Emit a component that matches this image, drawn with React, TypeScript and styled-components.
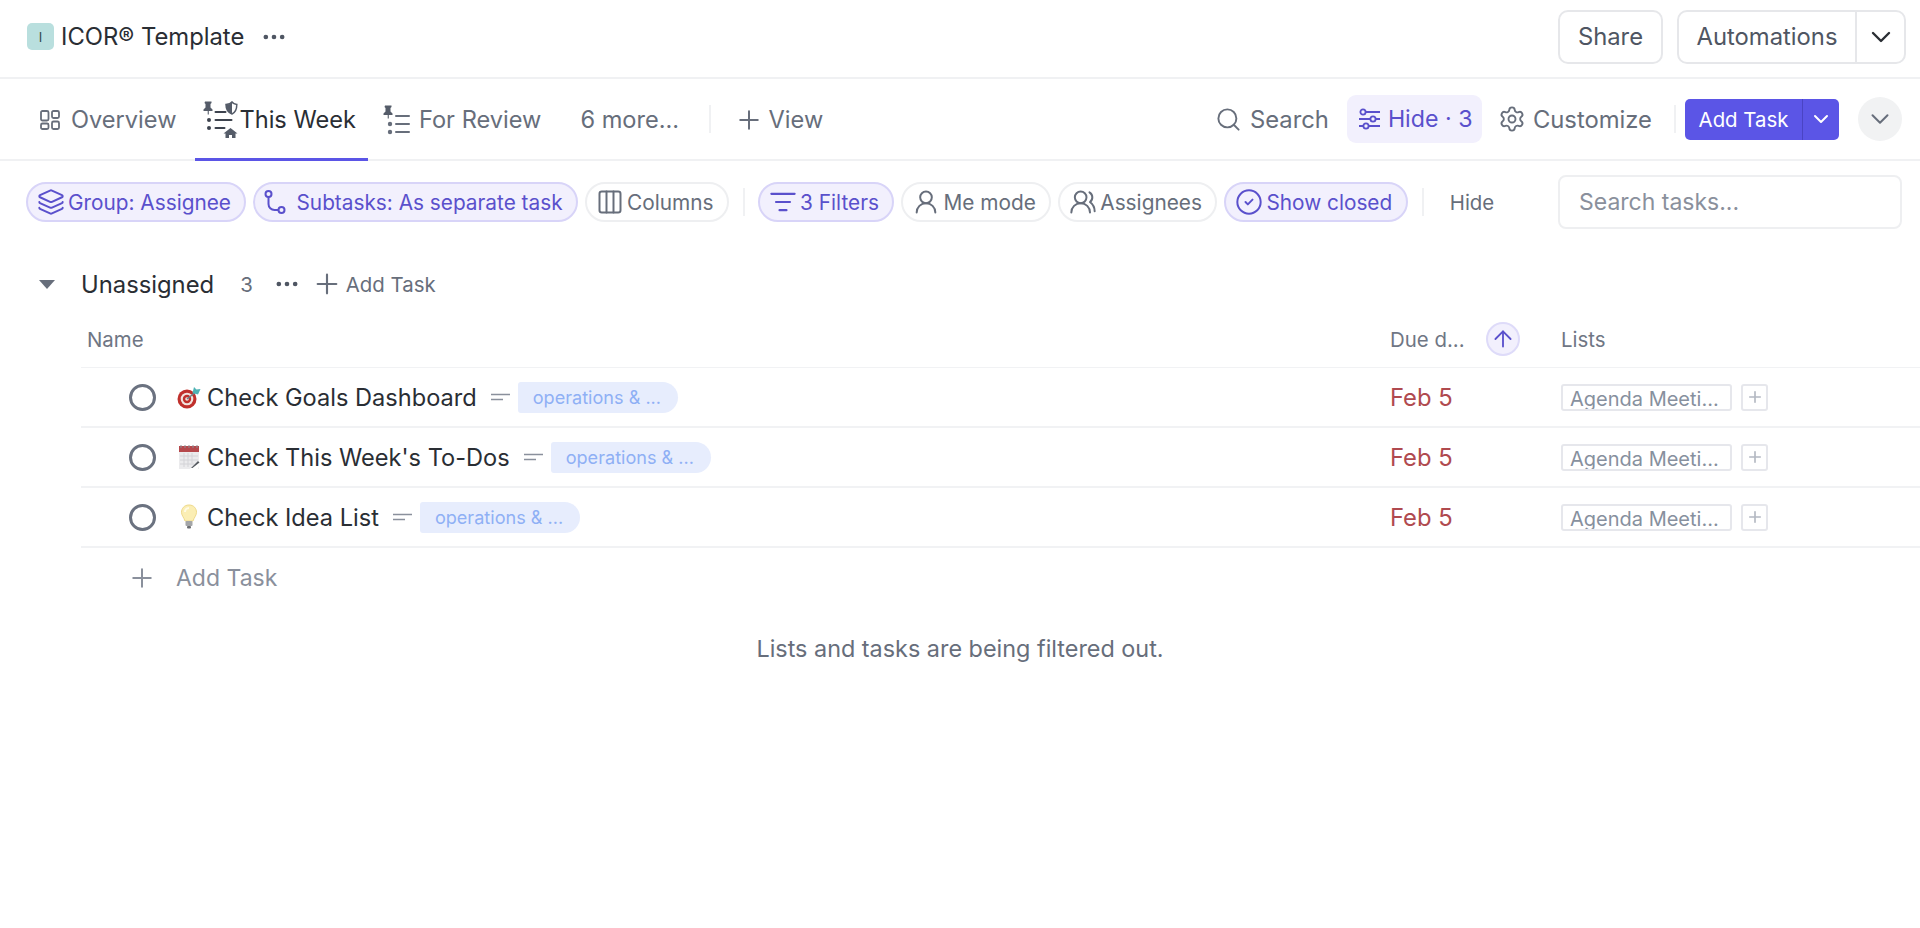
import React from 'react'
import styled, { createGlobalStyle } from 'styled-components'
import {
  ArrowUp,
  ChevronDown,
  CircleCheck,
  Columns3,
  Ellipsis,
  Layers,
  ListFilter,
  Plus,
  Search,
  Settings,
  UserRound,
  UsersRound,
} from 'lucide-react'

const Global = createGlobalStyle`
  html, body { margin: 0; padding: 0; background: #fff; }
  body { font-family: Inter, "Noto Sans", sans-serif; color: #2a2e34; }
  * { box-sizing: border-box; }
`

const Page = styled.div`
  width: 1920px;
  height: 928px;
  overflow: hidden;
  background: #fff;
`

const Header = styled.header`
  height: 79px;
  display: flex;
  align-items: center;
  padding: 0 14px 4px 27px;
  border-bottom: 2px solid #f0f1f3;
`

const Logo = styled.div`
  width: 27px;
  height: 27px;
  border-radius: 5px;
  background: #b9dfde;
  color: #2f4a4c;
  font-size: 13px;
  display: flex;
  align-items: center;
  justify-content: center;
  margin-right: 7px;
`

const Title = styled.div`
  font-size: 23.8px;
  color: #2a2e34;
`

const Dots = styled.span<{ $ml: number }>`
  display: inline-flex;
  margin-left: ${(p) => p.$ml}px;
  color: #4f5663;
`

const HeaderRight = styled.div`
  margin-left: auto;
  display: flex;
  gap: 14px;
`

const OutlineButton = styled.div`
  height: 54px;
  border: 2px solid #e6e7ea;
  border-radius: 10px;
  display: flex;
  align-items: center;
  font-size: 23.8px;
  color: #4f5663;
`

const ShareButton = styled(OutlineButton)`
  width: 105px;
  justify-content: center;
`

const AutomationsButton = styled(OutlineButton)`
  width: 229px;
`

const AutoLabel = styled.div`
  width: 178px;
  height: 100%;
  display: flex;
  align-items: center;
  justify-content: center;
  border-right: 2px solid #e6e7ea;
`

const AutoCaret = styled.div`
  flex: 1;
  display: flex;
  justify-content: center;
  color: #2a2e34;
`

const TabBar = styled.nav`
  height: 82px;
  display: flex;
  align-items: stretch;
  padding: 0 18px 0 33px;
  gap: 7px;
  border-bottom: 2px solid #f0f1f3;
`

const Tab = styled.div<{ $active?: boolean; $gap?: number; $ml?: number }>`
  position: relative;
  display: flex;
  align-items: center;
  gap: ${(p) => p.$gap ?? 9}px;
  padding: 2px 12px 0 7px;
  margin-left: ${(p) => p.$ml ?? 0}px;
  margin-bottom: -2px;
  font-size: 23.6px;
  color: ${(p) => (p.$active ? '#2a2e34' : '#676e7b')};
  border-bottom: 3px solid ${(p) => (p.$active ? '#5b55e6' : 'transparent')};
`

const VRule = styled.div<{ $ml: number; $mr: number }>`
  width: 2px;
  height: 28px;
  background: #f0f1f3;
  margin: 0 ${(p) => p.$mr}px 0 ${(p) => p.$ml}px;
  align-self: center;
  flex: none;
`

const Spacer = styled.div`
  flex: 1;
`

const PlainAction = styled.div<{ $ml: number; $gap: number }>`
  display: flex;
  align-items: center;
  gap: ${(p) => p.$gap}px;
  margin-left: ${(p) => p.$ml}px;
  font-size: 23.8px;
  color: #676e7b;
`

const HideChip = styled.div`
  height: 48px;
  width: 135px;
  align-self: center;
  margin-left: 11px;
  padding-left: 12px;
  border-radius: 9px;
  background: #f2f0fd;
  color: #5a50cc;
  display: flex;
  align-items: center;
  gap: 8px;
  font-size: 23.2px;
  white-space: nowrap;
`

const AddTaskButton = styled.div`
  align-self: center;
  width: 154px;
  height: 41px;
  border-radius: 5px;
  background: #5b55e6;
  color: #fff;
  display: flex;
  align-items: center;
  font-size: 20.4px;
`

const AddTaskLabel = styled.div`
  width: 118px;
  height: 100%;
  display: flex;
  align-items: center;
  justify-content: center;
  border-right: 1px solid #4a44c4;
`

const AddTaskCaret = styled.div`
  flex: 1;
  display: flex;
  justify-content: center;
`

const CircleToggle = styled.div`
  align-self: center;
  width: 44px;
  height: 44px;
  border-radius: 50%;
  background: #f1f2f3;
  color: #676e7b;
  margin-left: 12px;
  display: flex;
  align-items: center;
  justify-content: center;
`

const FilterBar = styled.div`
  height: 82px;
  display: flex;
  align-items: center;
  padding: 0 18px 0 26px;
  gap: 7px;
`

const Chip = styled.div<{ $on?: boolean; $gap?: number }>`
  height: 40px;
  padding: 0 13.5px 0 9px;
  border-radius: 20px;
  display: flex;
  align-items: center;
  gap: ${(p) => p.$gap ?? 3}px;
  font-size: 20.8px;
  white-space: nowrap;
  border: 2px solid ${(p) => (p.$on ? '#d8d4f8' : '#eeeff1')};
  background: ${(p) => (p.$on ? '#f2f0fd' : '#fff')};
  color: ${(p) => (p.$on ? '#5a50cc' : '#676e7b')};
`

const HideText = styled.div`
  margin-left: 12px;
  font-size: 20.4px;
  color: #676e7b;
`

const SearchInput = styled.div`
  margin-left: auto;
  width: 344px;
  height: 54px;
  border: 2px solid #eeeff1;
  border-radius: 8px;
  padding-left: 19px;
  display: flex;
  align-items: center;
  font-size: 23px;
  color: #8a909c;
`

const GroupHead = styled.div`
  margin-top: 22px;
  height: 38px;
  display: flex;
  align-items: center;
  padding-left: 39px;
`

const Triangle = styled.div`
  width: 0;
  height: 0;
  border-left: 8px solid transparent;
  border-right: 8px solid transparent;
  border-top: 9px solid #676e7b;
  margin-right: 26px;
`

const GroupName = styled.div`
  font-size: 23.8px;
  color: #2a2e34;
`

const GroupCount = styled.div`
  font-size: 20.4px;
  color: #676e7b;
  margin-left: 26px;
`

const GroupAdd = styled.div`
  display: flex;
  align-items: center;
  gap: 3px;
  margin-left: 10px;
  font-size: 20.4px;
  color: #676e7b;
`

const Table = styled.div`
  margin-left: 81px;
`

const Grid = styled.div`
  display: grid;
  grid-template-columns: 1309px 171px 1fr;
  align-items: center;
`

const ColumnHead = styled(Grid)`
  padding: 19px 0 11px;
  border-bottom: 1px solid #f1f2f4;
  font-size: 20.4px;
  color: #6f7684;
`

const NameHead = styled.div`
  padding-left: 6px;
`

const DueHead = styled.div`
  display: flex;
  align-items: center;
  gap: 21px;
`

const SortBadge = styled.div`
  width: 34px;
  height: 34px;
  border-radius: 50%;
  background: #f2f0fd;
  border: 2px solid #dedbf9;
  color: #5a50cc;
  display: flex;
  align-items: center;
  justify-content: center;
`

const Row = styled(Grid)`
  height: 60px;
  border-bottom: 2px solid #f1f2f4;
`

const NameCell = styled.div`
  display: flex;
  align-items: center;
  padding-left: 48px;
`

const StatusRing = styled.div`
  width: 27px;
  height: 27px;
  border: 3px solid #6b7280;
  border-radius: 50%;
  margin-right: 21px;
  flex: none;
`

const Emoji = styled.svg`
  width: 24px;
  height: 28px;
  margin-right: 6px;
  flex: none;
`

const TaskName = styled.div`
  font-size: 23.6px;
  color: #2a2e34;
`

const DescMark = styled.svg`
  width: 19px;
  height: 10px;
  margin: 0 8px 0 14px;
  flex: none;
`

const Tag = styled.div`
  width: 160px;
  height: 31px;
  border-radius: 3px 16px 16px 3px;
  background: #e7edfd;
  color: #8fb0f5;
  font-size: 18.1px;
  padding-left: 15px;
  display: flex;
  align-items: center;
`

const DueDate = styled.div`
  font-size: 23.8px;
  color: #b04a4f;
`

const ListCell = styled.div`
  display: flex;
  gap: 9px;
`

const ListChip = styled.div`
  width: 171px;
  height: 27px;
  border: 2px solid #e6e7ec;
  border-radius: 3px;
  padding-left: 7px;
  font-size: 20px;
  line-height: 26px;
  color: #87909e;
  overflow: hidden;
  white-space: nowrap;
`

const ListAdd = styled.div`
  width: 27px;
  height: 27px;
  border: 2px solid #e6e7ec;
  border-radius: 3px;
  color: #b3b8c2;
  display: flex;
  align-items: center;
  justify-content: center;
`

const AddRow = styled.div`
  height: 59px;
  display: flex;
  align-items: center;
  padding-left: 46px;
  gap: 19px;
  font-size: 23px;
  color: #8a909c;
`

const Notice = styled.div`
  margin-top: 28px;
  text-align: center;
  line-height: 28px;
  font-size: 23.4px;
  color: #676e7b;
`

const Pin = () => (
  <path d="M3 0.5h6.5v1.5l-1 1v3.5l2 2v1.5H6.8v3.5H5.7v-3.5H1.5V8.5l2-2V3l-1-1z" fill="#555c69" />
)

const WeekIcon = () => (
  <svg width="36" height="37" viewBox="0 0 36 37" fill="none">
    <Pin />
    <g fill="#3d434e">
      <circle cx="7" cy="19" r="2" />
      <circle cx="7" cy="27" r="2" />
    </g>
    <g stroke="#3d434e" strokeWidth="2" strokeLinecap="round">
      <path d="M13.5 11h10" />
      <path d="M13.5 19h16" />
      <path d="M13.5 27h9" />
    </g>
    <path d="M24 3.5c3-.3 5-1.2 6-2.5 1 1.3 2.8 2.2 4.8 2.5 0 5-1.5 8-4.8 9.5-3.8-1.5-6-4.500-6-9.500z" stroke="#555c69" strokeWidth="1.500" />
    <path d="M24 4c2-.300 4-1 6-2.500v11.500c-3.800-1.500-6-4-6-9z" fill="#555c69" />
    <path d="M21.500 32.500L28.500 27l7 5.500h-2v4.500h-3.500v-3h-3v3h-3.500v-4.500z" fill="#555c69" />
  </svg>
)

const ReviewIcon = () => (
  <svg width="28" height="30" viewBox="0 0 28 30" fill="none">
    <Pin />
    <g fill="#676e7b">
      <circle cx="8" cy="19" r="2.200" />
      <circle cx="8" cy="27" r="2.200" />
    </g>
    <g stroke="#676e7b" strokeWidth="2" strokeLinecap="round">
      <path d="M14 11h13" />
      <path d="M14 19h13" />
      <path d="M14 27h13" />
    </g>
  </svg>
)

const OverviewIcon = () => (
  <svg width="20" height="20" viewBox="0 0 20 20" fill="none" stroke="#676e7b" strokeWidth="1.800">
    <rect x="1" y="1" width="7.500" height="9.500" rx="1.500" />
    <rect x="12" y="1" width="7" height="7" rx="1.500" />
    <rect x="1" y="13.500" width="7.500" height="5.500" rx="1.500" />
    <rect x="12" y="11.500" width="7" height="7.500" rx="1.500" />
  </svg>
)

const SubtaskIcon = () => (
  <svg width="22" height="24" viewBox="0 0 22 24" fill="none" stroke="#5a50cc" strokeWidth="2">
    <circle cx="4.500" cy="4" r="3" />
    <circle cx="17.500" cy="20" r="3" />
    <path d="M4.500 7v7a6 6 0 0 0 6 6h4" />
  </svg>
)

const HideIcon = () => (
  <svg width="21" height="22" viewBox="0 0 21 22" fill="none" stroke="#5a50cc" strokeWidth="1.800">
    <path d="M7 4h14M0 11h11M17 11h4M0 18h4M10 18h11" />
    <circle cx="4" cy="4" r="2.600" />
    <circle cx="14" cy="11" r="2.600" />
    <circle cx="7" cy="18" r="2.600" />
  </svg>
)

const TargetEmoji = () => (
  <Emoji viewBox="0 0 24 28">
    <circle cx="10" cy="16" r="9.500" fill="#c0302c" />
    <circle cx="10" cy="16" r="6.300" fill="#f2e4df" />
    <circle cx="10" cy="16" r="4.200" fill="#c0302c" />
    <circle cx="10" cy="16" r="1.800" fill="#f2e4df" />
    <path d="M10 16L20 8" stroke="#6d7f86" strokeWidth="1.400" />
    <path d="M15.500 10l1.500-6 2.500 2.500 4-.5-2.500 5.500z" fill="#4fb3b5" />
  </Emoji>
)

const CalendarEmoji = () => (
  <Emoji viewBox="0 0 24 28">
    <rect x="2" y="4" width="20" height="22" fill="#ebebed" />
    <rect x="2" y="3" width="20" height="6" fill="#b5484c" />
    <g stroke="#8d8d92" strokeWidth="1">
      <path d="M4 2v3M8 2v3M12 2v3M16 2v3M20 2v3" />
    </g>
    <g stroke="#d3d3d7" strokeWidth="1">
      <path d="M3 13h18M3 17h18M3 21h14M7 10v14M11 10v14M15 10v10" />
    </g>
    <path d="M13 26l8-8 2 1-2 7z" fill="#fff" />
    <path d="M14 25l7-7 1.500 1.500-7 5.500z" fill="#555a60" />
  </Emoji>
)

const BulbEmoji = () => (
  <Emoji viewBox="0 0 24 28">
    <path d="M12 2c-5 0-7.500 3.700-7.500 7.300 0 3.200 2.500 5.200 3.500 8.700h8c1-3.500 3.500-5.500 3.500-8.700C19.500 5.700 17 2 12 2z" fill="#fbeeb4" stroke="#eed98a" strokeWidth="1" />
    <path d="M12 5c-2.500 0-4 2-4 4" stroke="#fffbe6" strokeWidth="2" fill="none" />
    <rect x="8.500" y="18" width="7" height="5" rx="1" fill="#a4a6a8" />
    <rect x="10" y="23" width="4" height="2.500" rx="1" fill="#6c6e72" />
  </Emoji>
)

const tasks = [
  { name: 'Check Goals Dashboard', emoji: <TargetEmoji /> },
  { name: "Check This Week's To-Dos", emoji: <CalendarEmoji /> },
  { name: 'Check Idea List', emoji: <BulbEmoji /> },
]

export default function App() {
  return (
    <Page>
      <Global />
      <Header>
        <Logo>I</Logo>
        <Title>ICOR® Template</Title>
        <Dots $ml={16}>
          <Ellipsis size={28} />
        </Dots>
        <HeaderRight>
          <ShareButton>Share</ShareButton>
          <AutomationsButton>
            <AutoLabel>Automations</AutoLabel>
            <AutoCaret>
              <ChevronDown size={32} strokeWidth={1.8} />
            </AutoCaret>
          </AutomationsButton>
        </HeaderRight>
      </Header>

      <TabBar>
        <Tab $gap={11}>
          <OverviewIcon />
          Overview
        </Tab>
        <Tab $active $gap={1}>
          <WeekIcon />
          This Week
        </Tab>
        <Tab>
          <ReviewIcon />
          For Review
        </Tab>
        <Tab $ml={13}>6 more...</Tab>
        <VRule $ml={11} $mr={9} />
        <Tab $gap={4.5}>
          <Plus size={30} strokeWidth={1.6} />
          View
        </Tab>
        <Spacer />
        <PlainAction $ml={0} $gap={8}>
          <Search size={27} strokeWidth={1.7} />
          Search
        </PlainAction>
        <HideChip>
          <HideIcon />
          Hide · 3
        </HideChip>
        <PlainAction $ml={9} $gap={7}>
          <Settings size={28} strokeWidth={1.6} />
          Customize
        </PlainAction>
        <VRule $ml={15} $mr={2} />
        <AddTaskButton>
          <AddTaskLabel>Add Task</AddTaskLabel>
          <AddTaskCaret>
            <ChevronDown size={24} strokeWidth={2} />
          </AddTaskCaret>
        </AddTaskButton>
        <CircleToggle>
          <ChevronDown size={30} strokeWidth={1.6} />
        </CircleToggle>
      </TabBar>

      <FilterBar>
        <Chip $on>
          <Layers size={28} strokeWidth={1.7} />
          Group: Assignee
        </Chip>
        <Chip $on $gap={10}>
          <SubtaskIcon />
          Subtasks: As separate task
        </Chip>
        <Chip>
          <Columns3 size={28} strokeWidth={1.7} />
          Columns
        </Chip>
        <VRule $ml={7} $mr={6} />
        <Chip $on>
          <ListFilter size={28} strokeWidth={1.8} />
          3 Filters
        </Chip>
        <Chip>
          <UserRound size={28} strokeWidth={1.7} />
          Me mode
        </Chip>
        <Chip>
          <UsersRound size={28} strokeWidth={1.7} />
          Assignees
        </Chip>
        <Chip $on>
          <CircleCheck size={28} strokeWidth={1.7} />
          Show closed
        </Chip>
        <VRule $ml={7} $mr={7} />
        <HideText>Hide</HideText>
        <SearchInput>Search tasks...</SearchInput>
      </FilterBar>

      <GroupHead>
        <Triangle />
        <GroupName>Unassigned</GroupName>
        <GroupCount>3</GroupCount>
        <Dots $ml={20}>
          <Ellipsis size={28} />
        </Dots>
        <GroupAdd>
          <Plus size={32} strokeWidth={1.6} />
          Add Task
        </GroupAdd>
      </GroupHead>

      <Table>
        <ColumnHead>
          <NameHead>Name</NameHead>
          <DueHead>
            Due d...
            <SortBadge>
              <ArrowUp size={26} strokeWidth={1.7} />
            </SortBadge>
          </DueHead>
          <div>Lists</div>
        </ColumnHead>
        {tasks.map((t) => (
          <Row key={t.name}>
            <NameCell>
              <StatusRing />
              {t.emoji}
              <TaskName>{t.name}</TaskName>
              <DescMark viewBox="0 0 19 10">
                <path d="M0 2.500h19M0 7.500h12" stroke="#8a909c" strokeWidth="1.600" />
              </DescMark>
              <Tag>operations &amp; ...</Tag>
            </NameCell>
            <DueDate>Feb 5</DueDate>
            <ListCell>
              <ListChip>Agenda Meeti...</ListChip>
              <ListAdd>
                <Plus size={18} strokeWidth={2.2} />
              </ListAdd>
            </ListCell>
          </Row>
        ))}
        <AddRow>
          <Plus size={30} strokeWidth={1.6} />
          Add Task
        </AddRow>
      </Table>

      <Notice>Lists and tasks are being filtered out.</Notice>
    </Page>
  )
}
